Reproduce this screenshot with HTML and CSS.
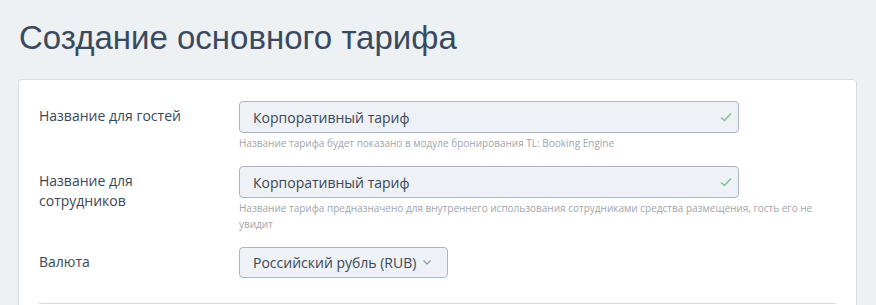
FILE: index.html
```html
<!DOCTYPE html>
<html lang="ru">
<head>
  <meta charset="UTF-8">
  <title>Создание основного тарифа</title>
  <link rel="stylesheet" href="styles.css">
</head>
<body>
  <h1 class="page-title">Создание основного тарифа</h1>

  <div class="card">
    <div class="form-row">
      <label class="form-label">Название для гостей</label>
      <div class="form-field">
        <div class="input is-valid">
          <span class="input-text">Корпоративный тариф</span>
          <svg class="check" width="12" height="10" viewBox="0 0 12 10"><path d="M1 5.5l3.5 3L11 1.5" fill="none" stroke="currentColor" stroke-width="1.4"/></svg>
        </div>
        <div class="hint">Название тарифа будет показано в модуле бронирования TL: Booking Engine</div>
      </div>
    </div>

    <div class="form-row">
      <label class="form-label">Название для сотрудников</label>
      <div class="form-field">
        <div class="input is-valid">
          <span class="input-text">Корпоративный тариф</span>
          <svg class="check" width="12" height="10" viewBox="0 0 12 10"><path d="M1 5.5l3.5 3L11 1.5" fill="none" stroke="currentColor" stroke-width="1.4"/></svg>
        </div>
        <div class="hint">Название тарифа предназначено для внутреннего использования сотрудниками средства размещения, гость его не увидит</div>
      </div>
    </div>

    <div class="form-row">
      <label class="form-label">Валюта</label>
      <div class="form-field">
        <div class="select">
          <span class="input-text">Российский рубль (RUB)</span>
          <svg class="chevron" width="8" height="5" viewBox="0 0 8 5"><path d="M0.5 0.5l3.5 3.5 3.5-3.5" fill="none" stroke="currentColor" stroke-width="1.1"/></svg>
        </div>
      </div>
    </div>

    <hr class="divider">
  </div>
</body>
</html>
```

FILE: styles.css
```css
body {
  margin: 0;
  padding: 0 19px 0 18px;
  background: #eef1f4;
  font-family: "Open Sans", sans-serif;
  color: #3b4756;
}
.page-title {
  margin: 0;
  padding: 17px 0 0 1px;
  height: 62px;
  font-family: "Liberation Sans", Arial, sans-serif;
  font-weight: normal;
  font-size: 33px;
  line-height: 42px;
  color: #3a4a5e;
}
.card {
  background: #fff;
  border: 1px solid #d5dbe3;
  border-radius: 4px;
  padding: 21px 20px 40px 20px;
}
.form-row {
  display: flex;
  margin-bottom: 15px;
}
.form-label {
  box-sizing: border-box;
  flex: 0 0 200px;
  padding-right: 30px;
  padding-top: 5px;
  font-size: 14px;
  line-height: 20px;
}
.form-field {
  flex: 1;
}
.input, .select {
  box-sizing: border-box;
  display: flex;
  align-items: center;
  height: 32px;
  padding: 0 6px 0 13px;
  background: #eef1f5;
  border: 1px solid #a8b5c6;
  border-radius: 4px;
  font-size: 14px;
}
.input {
  width: 500px;
}
.input-text {
  flex: 1;
}
.check {
  color: #7cc38a;
}
.select {
  display: inline-flex;
  height: 31px;
  width: 209px;
  padding-right: 16px;
}
.chevron {
  color: #8a96a5;
}
.hint {
  margin-top: 2px;
  font-size: 10px;
  line-height: 16px;
  color: #a0a5ab;
}
.divider {
  border: 0;
  border-top: 1px solid #d5dbe3;
  margin: 25px 0 0 0;
}
```
